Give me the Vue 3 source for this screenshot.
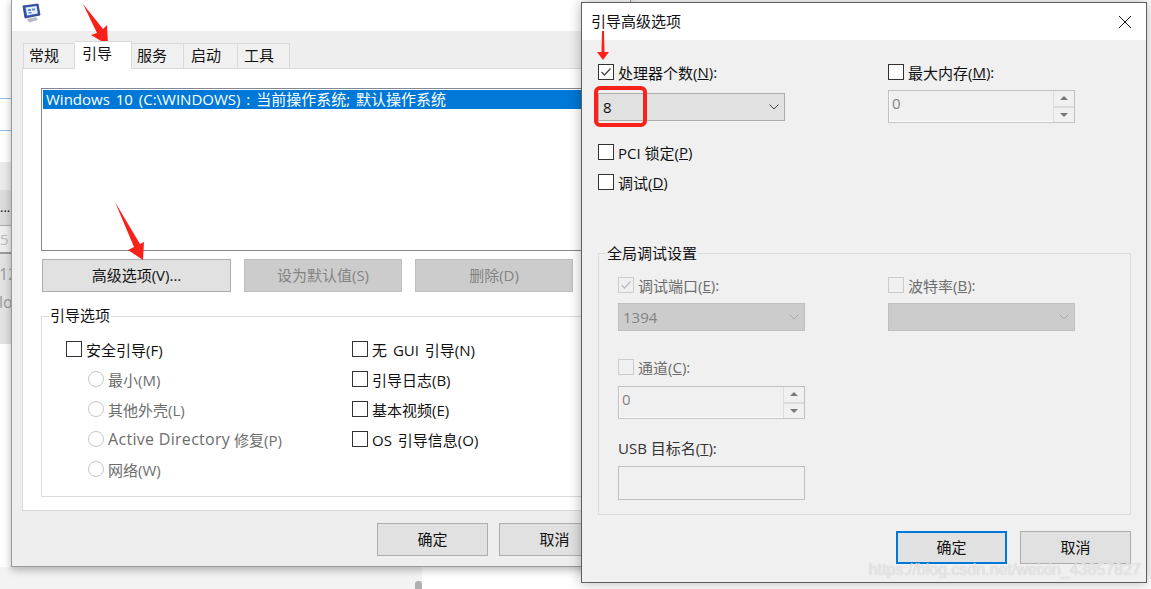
<script setup>
const tabs = [
  { label: '常规', active: false },
  { label: '引导', active: true },
  { label: '服务', active: false },
  { label: '启动', active: false },
  { label: '工具', active: false },
]
const radios = ['最小(M)', '其他外壳(L)']
const rightChecks = ['无 GUI 引导(N)', '引导日志(B)', '基本视频(E)', 'OS 引导信息(O)']
</script>

<template>
  <div class="desktop">
    <div class="backdrop">
      <div class="strip-blue b1"></div>
      <div class="strip-blue b2"></div>
      <div class="strip-pale"></div>
      <div class="strip-gray">...</div>
      <div class="strip-light">5</div>
      <div class="strip-mid">
        <div class="strip-text">12</div>
        <div class="strip-text">lo</div>
      </div>
      <div class="bottom-band"></div>
      <div class="scroll-thumb"></div>
    </div>

    <section class="win-main">
      <header class="main-title">
        <svg class="app-icon" width="19" height="20" viewBox="0 0 19 20">
          <path d="M1 3 L16 1 L18 12 L3 15 Z" fill="#3357b0" stroke="#2b3a6e" stroke-width="0.8" />
          <path d="M3.5 4.5 L14.5 3 L15.8 10.5 L5 12.5 Z" fill="#e6eef9" />
          <path d="M6 6h3v2H6zM10 5.6h3v2h-3zM6.500 9h3v1.600h-3z" fill="#5f8fd8" />
          <path d="M5 16 L14 14 L16 17 L7 19.500 Z" fill="#b5bcc6" />
        </svg>
      </header>
      <div class="main-body">
        <nav class="tabs">
          <div v-for="t in tabs" :key="t.label" class="tab" :class="{ active: t.active }">{{ t.label }}</div>
        </nav>
        <div class="panel">
          <div class="listbox">
            <div class="list-row">Windows 10 (C:\WINDOWS) : 当前操作系统; 默认操作系统</div>
          </div>
          <div class="btn-row">
            <button class="btn adv">高级选项(V)...</button>
            <button class="btn off default">设为默认值(S)</button>
            <button class="btn off del">删除(D)</button>
          </div>
          <fieldset class="group boot-group">
            <legend>引导选项</legend>
            <div class="boot-cols">
              <div class="boot-col">
                <label class="check-line"><span class="box"></span>安全引导(F)</label>
                <label v-for="r in radios" :key="r" class="radio-line"><span class="radio"></span>{{ r }}</label>
                <label class="radio-line"><span class="radio"></span><span class="latin">Active Directory</span> 修复(P)</label>
                <label class="radio-line"><span class="radio"></span>网络(W)</label>
              </div>
              <div class="boot-col second">
                <label v-for="c in rightChecks" :key="c" class="check-line"><span class="box"></span>{{ c }}</label>
              </div>
            </div>
          </fieldset>
        </div>
        <div class="main-footer">
          <button class="btn foot">确定</button>
          <button class="btn foot">取消</button>
        </div>
      </div>
    </section>

    <section class="win-adv">
      <header class="adv-title">
        <span>引导高级选项</span>
        <svg class="close" width="14" height="14" viewBox="0 0 14 14">
          <path d="M1 1 L13 13 M13 1 L1 13" stroke="#111" stroke-width="1" fill="none" />
        </svg>
      </header>
      <div class="adv-body">
        <div class="two-col top-row">
          <div class="col">
            <label class="check-line tight">
              <span class="box">
                <svg width="14" height="14" viewBox="0 0 14 14"><path d="M2.500 7 L5.500 10 L11.500 3.500" stroke="#444" stroke-width="1.300" fill="none" /></svg>
              </span>处理器个数(<u>N</u>):
            </label>
            <div class="combo">
              <span>8</span>
              <svg width="10" height="6" viewBox="0 0 10 6"><path d="M0.500 0.500 L5 5 L9.500 0.500" stroke="#444" fill="none" /></svg>
            </div>
          </div>
          <div class="col">
            <label class="check-line tight"><span class="box"></span>最大内存(<u>M</u>):</label>
            <div class="spin">
              <span class="spin-val">0</span>
              <div class="spin-btns">
                <span class="arrow up"></span>
                <span class="arrow down"></span>
              </div>
            </div>
          </div>
        </div>

        <label class="check-line pci"><span class="box"></span>PCI 锁定(<u>P</u>)</label>
        <label class="check-line dbg"><span class="box"></span>调试(<u>D</u>)</label>

        <fieldset class="group debug-group">
          <legend>全局调试设置</legend>
          <div class="debug-inner">
            <div class="two-col">
              <div class="col narrow">
                <label class="check-line tight muted">
                  <span class="box dim">
                    <svg width="14" height="14" viewBox="0 0 14 14"><path d="M2.500 7 L5.500 10 L11.500 3.500" stroke="#bbb" stroke-width="1.300" fill="none" /></svg>
                  </span>调试端口(<u>E</u>):
                </label>
                <div class="combo dark">
                  <span>1394</span>
                  <svg width="10" height="6" viewBox="0 0 10 6"><path d="M0.500 0.500 L5 5 L9.500 0.500" stroke="#aaa" fill="none" /></svg>
                </div>
              </div>
              <div class="col">
                <label class="check-line tight muted"><span class="box dim"></span>波特率(<u>B</u>):</label>
                <div class="combo dark">
                  <span></span>
                  <svg width="10" height="6" viewBox="0 0 10 6"><path d="M0.500 0.500 L5 5 L9.500 0.500" stroke="#aaa" fill="none" /></svg>
                </div>
              </div>
            </div>
            <div class="channel">
              <label class="check-line tight muted"><span class="box dim"></span>通道(<u>C</u>):</label>
              <div class="spin spaced">
                <span class="spin-val">0</span>
                <div class="spin-btns">
                  <span class="arrow up"></span>
                  <span class="arrow down"></span>
                </div>
              </div>
            </div>
            <div class="usb">
              <div class="usb-label">USB 目标名(<u>T</u>):</div>
              <div class="usb-input"></div>
            </div>
          </div>
        </fieldset>

        <div class="adv-footer">
          <button class="btn foot2 focus">确定</button>
          <button class="btn foot2">取消</button>
        </div>
      </div>
      <div class="watermark">https://blog.csdn.net/weixin_43857827</div>
    </section>

    <svg class="annot" width="1151" height="589" viewBox="0 0 1151 589">
      <path d="M83 4 L103 29 L107 25 L108 45 L91 35 L97 33 Z" fill="#f8221a" />
      <path d="M115 202 L140 244 L144 242 L143 260 L128 250 L134 247 Z" fill="#f8221a" />
      <path d="M602 31 L604 31 L604.500 52 L609 52 L603 60 L597 52 L601.500 52 Z" fill="#f8221a" />
      <rect x="596" y="88" width="49" height="37" rx="4" fill="none" stroke="#f8221a" stroke-width="4" />
    </svg>
  </div>
</template>

<style>
html, body { margin: 0; background: #fff; overflow: hidden; }
</style>

<style scoped>
.desktop {
  position: relative;
  width: 1151px;
  height: 589px;
  overflow: hidden;
  background: #fff;
  font-family: "Open Sans", "Noto Sans CJK SC", sans-serif;
  font-size: 15px;
  color: #111;
}
.backdrop { position: absolute; inset: 0; }
.strip-blue { position: absolute; left: 0; width: 11px; height: 1px; background: #8dbde6; }
.strip-blue.b1 { top: 98px; }
.strip-blue.b2 { top: 130px; }
.strip-pale { position: absolute; left: 0; top: 162px; width: 11px; height: 28px; background: #ebebeb; }
.strip-gray { position: absolute; left: 0; top: 190px; width: 11px; height: 36px; box-sizing: border-box; border-bottom: 1px solid #aaa; background: #dcdcdc; font-size: 13px; line-height: 34px; }
.strip-light { position: absolute; left: 0; top: 226px; width: 11px; height: 28px; box-sizing: border-box; border-bottom: 2px solid #9b9b9b; background: #eee; color: #bbb; line-height: 26px; }
.strip-mid { position: absolute; left: 0; top: 254px; width: 11px; height: 90px; background: #e2e2e2; padding-top: 10px; box-sizing: border-box; font-size: 16px; }
.strip-text { margin-left: -1px; color: #999; line-height: 20px; height: 28px; white-space: nowrap; }
.bottom-band { position: absolute; left: 0; top: 567px; width: 422px; height: 22px; background: #f3f3f3; }
.scroll-thumb { position: absolute; left: 415px; top: 581px; width: 7px; height: 8px; border-radius: 3px 3px 0 0; background: #b0b0b0; }

.win-main {
  position: absolute;
  left: 11px;
  top: -1px;
  width: 620px;
  height: 568px;
  box-sizing: border-box;
  border: 1px solid #9a9a9a;
  box-shadow: 0 3px 8px rgba(0,0,0,.28);
  background: #eee;
  display: flex;
  flex-direction: column;
}
.main-title { height: 31px; background: #fff; padding: 3px 0 0 10px; box-sizing: border-box; flex: none; }
.app-icon { display: block; }
.main-body { flex: 1; padding: 12px 0 0 10px; display: flex; flex-direction: column; min-height: 0; }
.tabs { display: flex; align-items: flex-end; height: 25px; flex: none; position: relative; z-index: 1; padding-left: 1px; }
.tab {
  height: 25px;
  box-sizing: border-box;
  width: 52px;
  border: 1px solid #d9d9d9;
  border-bottom: none;
  border-left: none;
  background: #f0f0f0;
  padding-left: 5px;
  line-height: 22px;
  font-size: 15px;
}
.tab:first-child { border-left: 1px solid #d9d9d9; }
.tab:nth-child(4) { width: 54px; padding-left: 7px; }
.tab:last-child { padding-left: 6px; }
.tab.active { background: #fff; height: 28px; width: 57px; margin-bottom: -1px; padding-left: 7px; line-height: 23px; }
.panel {
  flex: none;
  height: 443px;
  width: 620px;
  box-sizing: border-box;
  background: #fff;
  border: 1px solid #d9d9d9;
  padding: 19px 0 0 18px;
}
.listbox { width: 560px; height: 163px; box-sizing: border-box; border: 1px solid #828790; padding: 1px; background: #fff; }
.list-row { background: #0078d7; color: #fff; height: 19px; line-height: 19px; padding-left: 3px; font-size: 15px; white-space: nowrap; word-spacing: 2px; }
.btn-row { display: flex; margin-top: 8px; padding-left: 1px; }
.btn {
  box-sizing: border-box;
  font: inherit;
  color: #111;
  background: #e1e1e1;
  border: 1px solid #adadad;
  padding: 0 0 2px;
}
.adv { width: 189px; height: 33px; }
.off { background: #ccc; border-color: #bfbfbf; color: #838383; height: 33px; }
.default { width: 158px; margin-left: 13px; }
.del { width: 158px; margin-left: 13px; }
.group { margin: 0; padding: 0; border: 1px solid #dcdcdc; box-sizing: border-box; min-width: 0; }
.group legend { padding: 0 1px; margin-left: 7px; line-height: 20px; font-size: 15px; }
.boot-group { width: 581px; height: 191px; margin-top: 14px; }
.boot-group legend { margin-left: 7px; line-height: 18px; padding-bottom: 2px; }
.boot-cols { display: flex; padding: 8px 0 0 24px; }
.boot-col { flex: none; width: 286px; display: flex; flex-direction: column; }
.boot-col.second { word-spacing: 2px; }
.check-line { display: flex; align-items: center; height: 30px; white-space: pre; }
.box {
  flex: none;
  width: 16px;
  height: 16px;
  box-sizing: border-box;
  border: 1px solid #333;
  margin-right: 4px;
  background: #fff;
  display: flex;
  align-items: center;
  justify-content: center;
}
.box.dim { border-color: #ccc; background: #f0f0f0; }
.radio-line { display: flex; align-items: center; height: 30px; padding-left: 22px; color: #6d6d6d; white-space: pre; }
.latin { font-size: 16px; letter-spacing: .3px; }
.radio { flex: none; width: 16px; height: 16px; box-sizing: border-box; border: 1px solid #c6c6c6; border-radius: 50%; margin-right: 4px; background: #fff; }
.main-footer { display: flex; gap: 11px; padding: 12px 0 0 355px; }
.foot { width: 111px; height: 33px; }

.win-adv {
  position: absolute;
  left: 581px;
  top: 2px;
  width: 566px;
  height: 581px;
  box-sizing: border-box;
  border: 1px solid #5f5f5f;
  background: #f0f0f0;
  box-shadow: 0 0 12px rgba(0,0,0,.3);
  display: flex;
  flex-direction: column;
}
.adv-title {
  flex: none;
  height: 37px;
  box-sizing: border-box;
  background: #fff;
  padding: 0 14px 3px 9px;
  display: flex;
  align-items: center;
  justify-content: space-between;
}
.close { margin-top: 3px; }
.adv-body { flex: 1; padding: 20px 15px 0 16px; display: flex; flex-direction: column; min-height: 0; }
.two-col { display: flex; }
.col { flex: none; width: 290px; }
.col.narrow { width: 270px; }
.tight { height: 24px; }
.combo {
  box-sizing: border-box;
  width: 187px;
  height: 28px;
  margin-top: 9px;
  background: #e1e1e1;
  border: 1px solid #adadad;
  display: flex;
  align-items: center;
  justify-content: space-between;
  padding: 0 5px 0 4px;
}
.combo.dark { background: #ccc; border-color: #bfbfbf; color: #838383; margin-top: 6px; }
.spin {
  box-sizing: border-box;
  width: 187px;
  height: 33px;
  margin-top: 6px;
  border: 1px solid #bfbfbf;
  border-bottom-color: #c4c4c4;
  box-shadow: inset 0 -1px 0 #fff, inset 1px 0 0 #f8f8f8;
  display: flex;
  justify-content: space-between;
  align-items: stretch;
  padding-left: 3px;
  color: #838383;
  background: #f0f0f0;
}
.spin.spaced { margin-top: 7px; }
.spin-val { line-height: 24px; }
.spin-btns { width: 21px; display: flex; flex-direction: column; background: #f0f0f0; }
.arrow { flex: 1; display: flex; align-items: center; justify-content: center; border: 1px solid #dcdcdc; border-right: none; }
.arrow::before { content: ""; border-left: 4px solid transparent; border-right: 4px solid transparent; }
.arrow.up { border-top: none; }
.arrow.down { border-bottom: none; border-top: 1px solid #dcdcdc; }
.arrow.up::before { border-bottom: 4px solid #777; }
.arrow.down::before { border-top: 4px solid #777; }
.pci { margin-top: 14px; }
.muted { color: #6d6d6d; }
.debug-group { width: 533px; height: 272px; margin-top: 46px; }
.debug-inner { padding: 10px 0 0 19px; }
.channel { margin-top: 24px; }
.usb { margin-top: 17px; }
.usb-label { line-height: 24px; color: #333; }
.usb-input { width: 187px; height: 34px; box-sizing: border-box; border: 1px solid #bfbfbf; margin-top: 6px; }
.adv-footer { display: flex; justify-content: flex-end; gap: 13px; margin-top: 16px; }
.foot2 { width: 111px; height: 33px; }
.focus { border: 2px solid #0078d7; }
.watermark {
  position: absolute;
  right: 5px;
  bottom: 3px;
  font-family: "Liberation Sans", sans-serif;
  font-size: 16px;
  color: rgba(255,255,255,.6);
  text-shadow: 0 0 1px rgba(170,170,170,.8);
  white-space: nowrap;
}
.annot { position: absolute; left: 0; top: 0; pointer-events: none; }
</style>
